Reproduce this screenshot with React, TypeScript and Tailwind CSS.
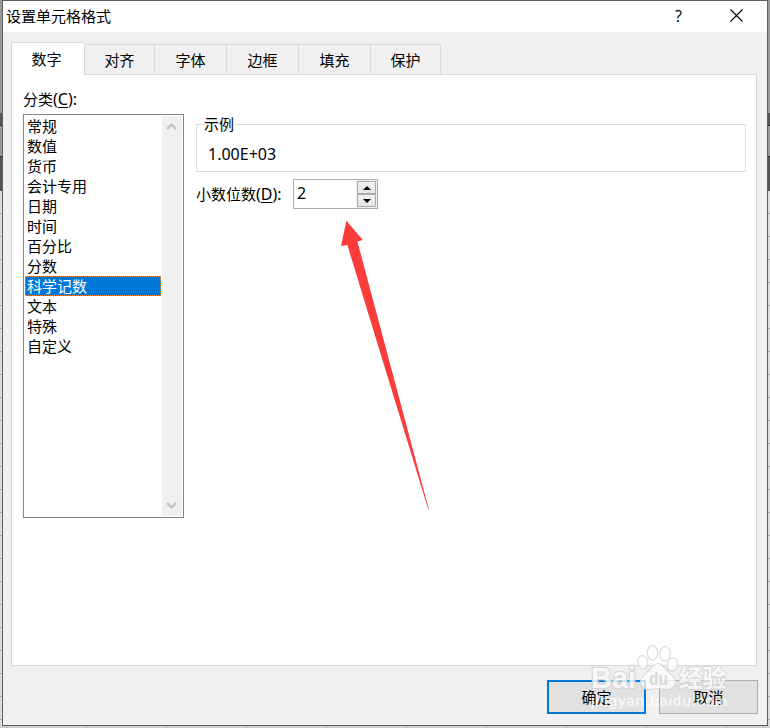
import { useState } from "react";

const tabs = [
  { label: "对齐", width: "w-[69px]" },
  { label: "字体", width: "w-[71px]" },
  { label: "边框", width: "w-[71px]" },
  { label: "填充", width: "w-[71px]" },
  { label: "保护", width: "w-[69px] border-r" },
];

const categories = [
  "常规",
  "数值",
  "货币",
  "会计专用",
  "日期",
  "时间",
  "百分比",
  "分数",
  "科学记数",
  "文本",
  "特殊",
  "自定义",
];

// Thin slice of the dimmed spreadsheet that shows beside the dialog
function SheetEdge() {
  return (
    <div className="flex w-0.5 flex-col">
      <div className="h-[113px] bg-[#999999]" />
      <div className="h-3 bg-[#565656]" />
      <div className="h-px bg-[#2b2b2b]" />
      <div className="h-[30px] bg-[#999999]" />
      <div className="h-[35px] border-t border-[#2b2b2b] bg-[#565656]" />
      <div className="flex-1 bg-[repeating-linear-gradient(to_bottom,#dcdcdc_0px,#dcdcdc_22px,#ababab_22px,#ababab_23px)]" />
    </div>
  );
}

function TitleBar() {
  return (
    <div className="flex h-[31px] items-center bg-white pb-0.5 pl-[3px]">
      <span className="flex-1">设置单元格格式</span>
      <button className="w-[57px] font-['Open_Sans','Noto_Sans',sans-serif] text-base leading-none" aria-label="?">
        ?
      </button>
      <button className="flex w-[60px] justify-center pr-0.5">
        <svg width="13" height="13" viewBox="0 0 13 13" stroke="black" strokeWidth="1.1">
          <path d="M.5.5l12 12M12.5.5l-12 12" />
        </svg>
      </button>
    </div>
  );
}

function TabStrip() {
  return (
    <div className="relative -mb-px flex items-end">
      <div className="flex h-[33px] w-[73px] items-center justify-center border-l border-t border-[#d9d9d9] bg-white pb-px pr-[3px]">
        数字
      </div>
      {tabs.map((tab) => (
        <div
          key={tab.label}
          className={`box-content flex h-[29px] items-center justify-center border-y border-l border-[#d9d9d9] bg-[#f0f0f0] ${tab.width}`}
        >
          {tab.label}
        </div>
      ))}
    </div>
  );
}

function CategoryList() {
  const [selected, setSelected] = useState("科学记数");
  return (
    <div className="flex h-[404px] w-[161px] border border-[#828790] bg-white p-px">
      <ul className="w-[137px] pr-px">
        {categories.map((name) => (
          <li
            key={name}
            onClick={() => setSelected(name)}
            className={`flex h-5 items-center pl-0.5 ${
              name === selected
                ? "border border-dotted border-[#ff8728] bg-[#0078d7] pl-px text-white"
                : ""
            }`}
          >
            {name}
          </li>
        ))}
      </ul>
      <div className="flex w-5 flex-col items-center justify-between bg-[#f0f0f0] py-1.5 pr-0.5">
        <svg width="11" height="9" viewBox="0 0 11 9" fill="none" stroke="#bfbfbf" strokeWidth="2">
          <path d="M1 7l4.5-4.5L10 7" />
        </svg>
        <svg width="11" height="9" viewBox="0 0 11 9" fill="none" stroke="#bfbfbf" strokeWidth="2">
          <path d="M1 2l4.5 4.5L10 2" />
        </svg>
      </div>
    </div>
  );
}

function DecimalPlaces() {
  return (
    <div className="mt-[7px] flex items-center">
      <label className="w-[97px] whitespace-nowrap">
        小数位数<span className="text-base leading-5">(<span className="underline underline-offset-2">D</span>):</span>
      </label>
      <div className="flex h-[30px] w-[85px] border border-[#abadb3] bg-white">
        <span className="flex-1 pl-[3px] pt-px text-base leading-6">2</span>
        <div className="flex w-[21px] flex-col bg-[#f0f0f0] p-px">
          <button className="flex h-[13px] items-center justify-center border border-[#acacac] bg-linear-to-b from-[#f0f0f0] to-[#e5e5e5]">
            <svg width="8" height="4" viewBox="0 0 8 4">
              <path d="M0 4l4-4 4 4z" />
            </svg>
          </button>
          <button className="flex h-[13px] items-center justify-center border border-[#acacac] bg-linear-to-b from-[#f0f0f0] to-[#e5e5e5]">
            <svg width="8" height="4" viewBox="0 0 8 4">
              <path d="M0 0l4 4 4-4z" />
            </svg>
          </button>
        </div>
      </div>
    </div>
  );
}

function Arrow() {
  return (
    <svg className="pointer-events-none absolute left-[340px] top-[220px]" width="90" height="290" viewBox="340 220 90 290">
      <path d="M346.4 220.8L362.8 240 357.4 241.6 381 330 428.9 509.4 428.3 509.4 373.300 330 347.4 245 341 246z" fill="#fc3b3b" />
    </svg>
  );
}

function Watermark() {
  return (
    <svg className="pointer-events-none absolute left-[580px] top-[640px]" width="160" height="80" viewBox="580 640 160 80">
      <g fill="#ffffff" stroke="#d2d2d2" strokeOpacity="0.8" strokeWidth="1.2" fillOpacity="0.75">
        <ellipse cx="642.7" cy="662.3" rx="5" ry="6.7" transform="rotate(-12 642.7 662.3)" />
        <ellipse cx="652.5" cy="652.7" rx="5.2" ry="7.3" />
        <ellipse cx="665" cy="653.7" rx="5.2" ry="7.3" transform="rotate(8 665 653.7)" />
        <ellipse cx="672.5" cy="664.5" rx="5" ry="6.7" transform="rotate(14 672.5 664.5)" />
        <path d="M658 663.5c4 0 6 3.500 8.500 6.500 4 4 9 7 9 12 0 5-4 7.500-8.500 7.500-3 0-6-1-9-1s-6 1-9 1c-5 0-8.500-3-8.500-7.500 0-5 5-8 9-12 2.500-3 4.500-6.500 8.500-6.500z" />
      </g>
      <g fontWeight="700" strokeLinejoin="round" paintOrder="stroke">
        <g fontFamily="Liberation Sans" fontSize="29">
          <text x="591" y="687.5" fill="#fafafa" stroke="#d4d4d4" strokeWidth="2.6" opacity="0.85" textLength="45" lengthAdjust="spacingAndGlyphs">
            Bai
          </text>
        </g>
        <text x="679" y="687" fontSize="24" fontFamily="Noto Sans CJK SC" fill="#fafafa" stroke="#d4d4d4" strokeWidth="2" opacity="0.85" textLength="47" lengthAdjust="spacingAndGlyphs">
          经验
        </text>
      </g>
      <text x="649" y="685" fontSize="19" fontWeight="700" fontFamily="Liberation Sans" fill="#d8d8d8" textLength="19" lengthAdjust="spacingAndGlyphs">
        du
      </text>
      <text x="591" y="706" fontSize="15" fontFamily="Liberation Sans" fill="#ffffff" fillOpacity="0.8" stroke="#ffffff" strokeOpacity="0.4" strokeWidth="0.4" textLength="136">
        jingyan.baidu.com
      </text>
    </svg>
  );
}

export default function App() {
  return (
    <div className="relative flex h-[728px] w-[770px] flex-col overflow-hidden bg-[#d4d4d4] font-['Noto_Sans','Noto_Sans_CJK_SC',sans-serif] text-[15px] leading-5 text-black">
      <div className="flex h-[726px]">
        <SheetEdge />
        <div className="flex w-[766px] flex-col border border-[#5f5f5f] bg-[#f0f0f0]">
          <TitleBar />
          <div className="px-2 pt-[10px]">
            <TabStrip />
            <div className="flex h-[592px] w-[746px] border border-[#d9d9d9] bg-white pl-[11px] pr-[10px] pt-[14px]">
              <div>
                <div className="mb-[5px]">
                  分类<span className="text-base leading-5">(<span className="underline underline-offset-2">C</span>):</span>
                </div>
                <CategoryList />
              </div>
              <div className="ml-3 flex-1 pt-[26px]">
                <fieldset className="mt-[9px] h-12 border border-[#dcdcdc]">
                  <div className="-mt-[11px] ml-[7px] w-[31px] bg-white">示例</div>
                  <div className="ml-[11px] mt-2.5 text-base leading-5">1.00E+03</div>
                </fieldset>
                <DecimalPlaces />
              </div>
            </div>
          </div>
          <div className="flex justify-end gap-[13px] pr-[9px] pt-[14px]">
            <button className="h-[34px] w-[99px] border-2 border-[#0078d7] bg-[#e1e1e1]">确定</button>
            <button className="h-[34px] w-[99px] border border-[#adadad] bg-[#e1e1e1]">取消</button>
          </div>
        </div>
        <SheetEdge />
      </div>
      <div className="h-0.5 bg-[repeating-linear-gradient(to_right,#cfcfcf_0px,#cfcfcf_6px,#ababab_6px,#ababab_7px,#cfcfcf_7px,#cfcfcf_80px)]" />
      <Arrow />
      <Watermark />
    </div>
  );
}
